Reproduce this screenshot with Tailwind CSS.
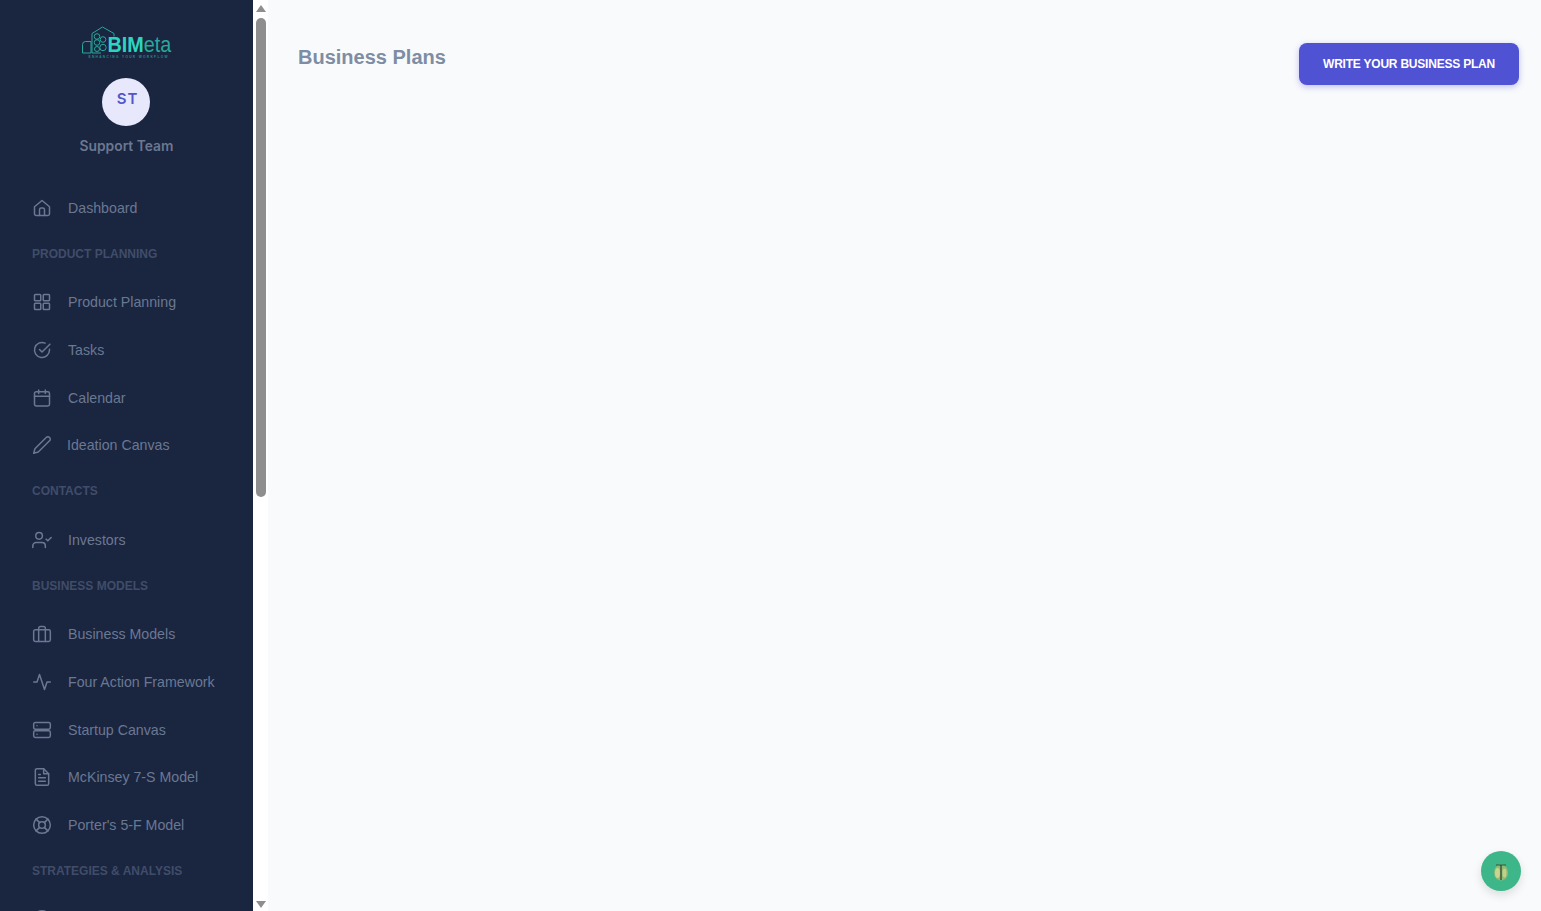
<!DOCTYPE html>
<html lang="en">
<head>
<meta charset="utf-8">
<title>Business Plans</title>
<script src="https://cdn.jsdelivr.net/npm/@tailwindcss/browser@4"></script>
</head>
<body class="h-[911px] overflow-hidden bg-[#f9fafc] font-['Liberation_Sans',Arial,sans-serif]">
<div class="flex h-[911px]">
  <aside class="w-[253px] shrink-0 h-full overflow-hidden bg-[#1a2540]">
    <div class="flex flex-col items-center pt-[24px] h-[184px]">
      <svg class="w-[92px] h-[36px]" viewBox="0 0 92 36" fill="none">
        <g stroke="#27a99b" stroke-width="1" stroke-linejoin="round" fill="none">
          <path d="M1.500 29v-8.500q0-3 3-3h5.500v11.500z"/>
          <path d="M11 9.500 21.500 3 33 9.500v3"/>
          <path d="M11 9.500V29h9"/>
          <circle cx="16" cy="12.500" r="2.800"/><circle cx="16" cy="18.500" r="2.800"/><circle cx="22" cy="15.500" r="2.800"/><circle cx="22" cy="23.500" r="3.200"/><circle cx="16" cy="25" r="2.500"/>
        </g>
        <text transform="translate(26.500 27.500) scale(0.9 1)" font-family="Liberation Sans,Arial,sans-serif" font-size="22" fill="#27a99b"><tspan font-weight="700" fill="#2dd4bf">BIM</tspan>eta</text>
        <text x="7.500" y="33.500" font-family="Liberation Sans,Arial,sans-serif" font-weight="700" font-size="3.200" fill="#1f8f88" textLength="79" lengthAdjust="spacing">ENHANCING YOUR WORKFLOW</text>
      </svg>
      <div class="mt-[18px] mr-[1px] w-[48px] h-[48px] rounded-full bg-[#e7e8fc] flex items-center justify-center pb-[6px] pl-[3px] font-['Inter',sans-serif] font-semibold text-[15px] tracking-[1px] text-[#5257c8]">ST</div>
      <div class="mt-[10px] font-['Inter',sans-serif] font-semibold text-[13.8px] leading-[20px] text-[#6b7890]">Support Team</div>
    </div>
    <nav class="text-[14.2px] leading-[19.6px] text-[#6a7892]">
      <a class="flex items-center h-[47.6px] pl-[32px] gap-[16px]"><svg class="w-[20px] h-[20px] shrink-0" viewBox="0 0 24 24" fill="none" stroke="currentColor" stroke-width="1.8" stroke-linecap="round" stroke-linejoin="round"><path d="M3 10.500 12 3l9 7.500V19a2 2 0 0 1-2 2H5a2 2 0 0 1-2-2z"/><path d="M9 21v-7a2 2 0 0 1 2-2h2a2 2 0 0 1 2 2v7"/></svg><span class="pt-[2px]">Dashboard</span></a>

      <div class="h-[47px] pl-[32px] flex items-center text-[12px] font-bold text-[#404d69]">PRODUCT PLANNING</div>
      <a class="flex items-center h-[47.6px] pl-[32px] gap-[16px]"><svg class="w-[20px] h-[20px] shrink-0" viewBox="0 0 24 24" fill="none" stroke="currentColor" stroke-width="1.8" stroke-linejoin="round"><rect x="3" y="3" width="7.500" height="7.500" rx="1"/><rect x="13.500" y="3" width="7.500" height="7.500" rx="1"/><rect x="3" y="13.500" width="7.500" height="7.500" rx="1"/><rect x="13.500" y="13.500" width="7.500" height="7.500" rx="1"/></svg><span>Product Planning</span></a>
      <a class="flex items-center h-[47.6px] pl-[32px] gap-[16px]"><svg class="w-[20px] h-[20px] shrink-0" viewBox="0 0 24 24" fill="none" stroke="currentColor" stroke-width="1.8" stroke-linecap="round" stroke-linejoin="round"><path d="M21 11.100V12a9 9 0 1 1-5.300-8.200"/><path d="M21.500 5 12 14.500l-3-3"/></svg><span class="pt-[2px]">Tasks</span></a>
      <a class="flex items-center h-[47.6px] pl-[32px] gap-[16px]"><svg class="w-[20px] h-[20px] shrink-0" viewBox="0 0 24 24" fill="none" stroke="currentColor" stroke-width="1.8" stroke-linecap="round" stroke-linejoin="round"><rect x="3" y="4.500" width="18" height="17" rx="2"/><path d="M16 2.500v4M8 2.500v4M3 10h18"/></svg><span class="pt-[2px]">Calendar</span></a>
      <a class="flex items-center h-[47.6px] pl-[32px] gap-[15px]"><svg class="w-[20px] h-[20px] shrink-0" viewBox="0 0 24 24" fill="none" stroke="currentColor" stroke-width="1.8" stroke-linecap="round" stroke-linejoin="round"><path d="M17 3a2.830 2.830 0 1 1 4 4L7.500 20.500 2 22l1.500-5.500z"/></svg><span class="pt-[2px]">Ideation Canvas</span></a>

      <div class="h-[47px] pb-[2px] pl-[32px] flex items-center text-[12px] font-bold text-[#404d69]">CONTACTS</div>
      <a class="flex items-center h-[47.6px] pl-[32px] gap-[16px]"><svg class="w-[20px] h-[20px] shrink-0" viewBox="0 0 24 24" fill="none" stroke="currentColor" stroke-width="1.8" stroke-linecap="round" stroke-linejoin="round"><path d="M16 21v-2a4 4 0 0 0-4-4H5a4 4 0 0 0-4 4v2"/><circle cx="8.500" cy="7" r="4"/><path d="m17 11 2 2 4-4"/></svg><span class="pt-[2px]">Investors</span></a>

      <div class="h-[47px] pl-[32px] flex items-center text-[12px] font-bold text-[#404d69]">BUSINESS MODELS</div>
      <a class="flex items-center h-[47.6px] pl-[32px] gap-[16px]"><svg class="w-[20px] h-[20px] shrink-0" viewBox="0 0 24 24" fill="none" stroke="currentColor" stroke-width="1.8" stroke-linecap="round" stroke-linejoin="round"><rect x="2" y="7" width="20" height="14" rx="2"/><path d="M16 21V5a2 2 0 0 0-2-2h-4a2 2 0 0 0-2 2v16"/></svg><span>Business Models</span></a>
      <a class="flex items-center h-[47.6px] pl-[32px] gap-[16px]"><svg class="w-[20px] h-[20px] shrink-0" viewBox="0 0 24 24" fill="none" stroke="currentColor" stroke-width="1.8" stroke-linecap="round" stroke-linejoin="round"><path d="M22 12h-4l-3 9L9 3l-3 9H2"/></svg><span class="pt-[2px]">Four Action Framework</span></a>
      <a class="flex items-center h-[47.6px] pl-[32px] gap-[16px]"><svg class="w-[20px] h-[20px] shrink-0" viewBox="0 0 24 24" fill="none" stroke="currentColor" stroke-width="1.8" stroke-linecap="round" stroke-linejoin="round"><rect x="2" y="3" width="20" height="8" rx="2"/><rect x="2" y="13" width="20" height="8" rx="2"/><path d="M6 7h.01M6 17h.01"/></svg><span class="pt-[2px]">Startup Canvas</span></a>
      <a class="flex items-center h-[47.6px] pl-[32px] gap-[16px]"><svg class="w-[20px] h-[20px] shrink-0" viewBox="0 0 24 24" fill="none" stroke="currentColor" stroke-width="1.8" stroke-linecap="round" stroke-linejoin="round"><path d="M14 2H6a2 2 0 0 0-2 2v16a2 2 0 0 0 2 2h12a2 2 0 0 0 2-2V8z"/><path d="M14 2v6h6M16 13H8M16 17H8M10 9H8"/></svg><span class="pt-[2px]">McKinsey 7-S Model</span></a>
      <a class="flex items-center h-[47.6px] pl-[32px] gap-[16px]"><svg class="w-[20px] h-[20px] shrink-0" viewBox="0 0 24 24" fill="none" stroke="currentColor" stroke-width="1.8" stroke-linecap="round" stroke-linejoin="round"><circle cx="12" cy="12" r="10"/><circle cx="12" cy="12" r="4"/><path d="m4.930 4.930 4.240 4.240M14.830 14.830l4.240 4.240M14.830 9.170l4.240-4.240M4.930 19.070l4.240-4.240"/></svg><span class="pt-[2px]">Porter's 5-F Model</span></a>

      <div class="h-[47px] pl-[32px] flex items-center text-[12px] font-bold text-[#404d69]">STRATEGIES &amp; ANALYSIS</div>
      <div class="flex items-center h-[47.6px] pl-[32px]"><svg class="w-[20px] h-[20px] shrink-0" viewBox="0 0 24 24" fill="none" stroke="currentColor" stroke-width="1.8"><circle cx="12" cy="12" r="10"/></svg></div>
    </nav>
  </aside>

  <div class="w-[15px] shrink-0 h-full bg-white flex flex-col items-center">
    <div class="mt-[5px] w-0 h-0 border-x-[5px] border-x-transparent border-b-[7px] border-b-[#8e8e8e]"></div>
    <div class="mt-[6px] w-[10px] h-[479px] rounded-[5px] bg-[#8e8e8e]"></div>
    <div class="mt-auto mb-[3px] w-0 h-0 border-x-[5px] border-x-transparent border-t-[7px] border-t-[#8e8e8e]"></div>
  </div>

  <main class="flex-1 min-w-0 bg-[#f9fafc] relative">
    <div class="flex items-start justify-between pl-[30px] pr-[22px] pt-[43px]">
      <h1 class="text-[20px] leading-[26px] font-bold text-[#7e8da3] mt-px">Business Plans</h1>
      <button class="w-[220px] h-[42px] pb-px rounded-lg bg-[#4f52d3] text-white text-[12px] font-bold tracking-[-0.22px] shadow-[0_2px_6px_rgba(79,82,211,0.35)]">WRITE YOUR BUSINESS PLAN</button>
    </div>
    <div class="absolute left-[1213px] top-[851px] w-[40px] h-[40px] rounded-full bg-[#3db78a] shadow-[0_4px_10px_rgba(0,0,0,0.12)] flex items-center justify-center">
      <svg class="w-[20px] h-[20px]" viewBox="0 0 20 20">
        <ellipse cx="10" cy="11.500" rx="7" ry="8" fill="#8fbb73"/>
        <ellipse cx="6.500" cy="12" rx="2.500" ry="5" fill="#c9d48f"/>
        <ellipse cx="13.500" cy="12" rx="2" ry="4.500" fill="#c4cf8a"/>
        <path d="M5 4h10" stroke="#38553f" stroke-width="1"/>
        <path d="M10 4v15" stroke="#2c3a30" stroke-width="1.200"/>
      </svg>
    </div>
  </main>
</div>
</body>
</html>
